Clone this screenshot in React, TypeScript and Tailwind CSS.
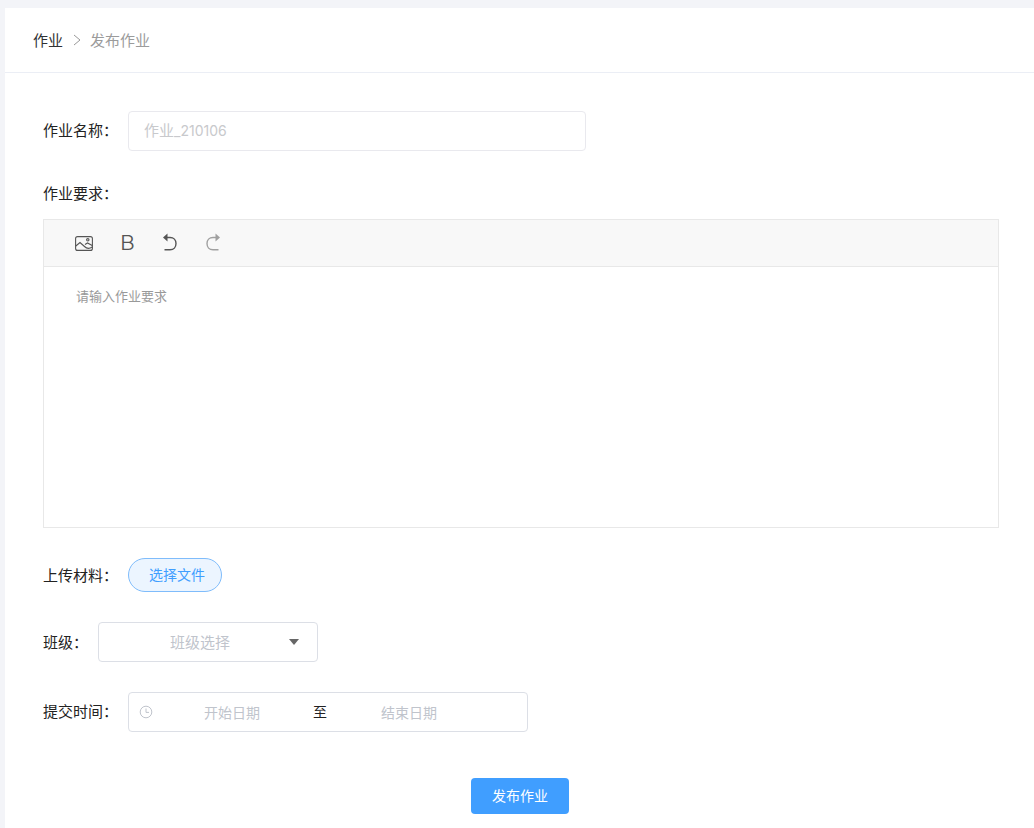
import React from 'react';

const font = "font-['Inter','Noto_Sans_CJK_SC',sans-serif]";

function ImageIcon() {
  return (
    <svg width="18" height="15" viewBox="0 0 18 15" fill="none" stroke="#555" strokeWidth="1.1">
      <rect x="0.6" y="0.6" width="16.8" height="13.8" rx="2" />
      <path d="M0.8 10 L5 6.5 L9.5 10.5 C11.5 12.5 14.5 12.8 17.2 11" />
      <path d="M10 8.5 L12.5 7 L17.2 9.5" />
      <circle cx="12.8" cy="3.8" r="1.2" />
    </svg>
  );
}

function UndoIcon({ color, flip }: { color: string; flip?: boolean }) {
  return (
    <svg
      width="15"
      height="18"
      viewBox="0 0 15 18"
      fill="none"
      stroke={color}
      strokeWidth="1.4"
      className={flip ? '-scale-x-100' : ''}
    >
      <path d="M3.5 4.5 H8 C11.8 4.5 14 7.2 14 10.5 C14 14 11.8 16.8 8 16.8 H2.5" />
      <path d="M5.5 0.5 L1 4.5 L5.5 8.5 Z" fill={color} stroke="none" />
    </svg>
  );
}

function ClockIcon() {
  return (
    <svg width="14" height="14" viewBox="0 0 14 14" fill="none" stroke="#c0c4cc" strokeWidth="1">
      <circle cx="7" cy="7" r="5.8" />
      <path d="M7 3.5 V7.4 H10" />
    </svg>
  );
}

export default function App() {
  return (
    <div className={`min-h-[828px] bg-[#f3f4f8] pl-[5px] pt-2 text-[15px] text-[#222] ${font}`}>
      <div className="h-[820px] overflow-hidden bg-white">
        <div className="flex h-[65px] items-center border-b border-[#ebeef5] pl-7">
          <span className="pt-[2px] text-[#303133]">作业</span>
          <svg width="8" height="12" viewBox="0 0 8 12" fill="none" stroke="#999" strokeWidth="1" className="ml-[10px] mr-[9px]">
            <path d="M1 1 L7 6 L1 11" />
          </svg>
          <span className="pt-[2px] text-[#9b9b9b]">发布作业</span>
        </div>

        <div className="pl-[38px] pr-[35px] pt-[38px]">
          <div className="flex items-center">
            <label className="w-[85px]">作业名称：</label>
            <div className="flex h-10 w-[458px] items-center rounded border border-[#e9e9ee] pl-[15px] text-[#c8c9cc]">
              作业<span className="text-sm">_210106</span>
            </div>
          </div>

          <div className="mt-[33px] h-5 leading-5">作业要求：</div>

          <div className="mt-[15px] h-[309px] border border-[#e8e8e8]">
            <div className="flex h-[47px] items-center border-b border-[#e8e8e8] bg-[#f8f8f8] pl-[31px]">
              <ImageIcon />
              <span className="ml-[27px] origin-left scale-x-[1.15] text-[20px] font-light leading-none text-[#555]">B</span>
              <span className="ml-[29px] -mt-[2px]">
                <UndoIcon color="#555" />
              </span>
              <span className="ml-[29px] -mt-[2px]">
                <UndoIcon color="#a0a0a0" flip />
              </span>
            </div>
            <div className="pl-8 pt-5 text-[13px] leading-[18px] text-[#999]">请输入作业要求</div>
          </div>

          <div className="mt-[30px] flex items-center">
            <label className="w-[85px] pt-[2px]">上传材料：</label>
            <div className="flex h-[34px] w-[94px] items-center justify-center rounded-[17px] border border-[#7fbcfb] bg-[#ecf5ff] pl-1 text-sm text-[#409eff]">
              选择文件
            </div>
          </div>

          <div className="mt-[30px] flex items-center">
            <label className="w-[55px] pt-[2px]">班级：</label>
            <div className="relative flex h-10 w-[220px] items-center justify-center rounded border border-[#dcdfe6] pr-[16px] pt-[2px] text-[#c0c4cc]">
              班级选择
              <span className="absolute right-[18px] top-[16px] h-0 w-0 border-x-[5px] border-t-[6px] border-x-transparent border-t-[#666]" />
            </div>
          </div>

          <div className="mt-[30px] flex items-center">
            <label className="w-[85px]">提交时间：</label>
            <div className="flex h-10 w-[400px] items-center rounded border border-[#dcdfe6] pl-[10px] text-sm">
              <ClockIcon />
              <span className="ml-[51px] pt-px text-[#c0c4cc]">开始日期</span>
              <span className="ml-[53px] text-[#222]">至</span>
              <span className="ml-[54px] pt-px text-[#c0c4cc]">结束日期</span>
            </div>
          </div>

          <div className="mt-[46px] flex justify-center pr-[2px]">
            <button className="h-9 w-[98px] rounded bg-[#409eff] text-sm text-white">发布作业</button>
          </div>
        </div>
      </div>
    </div>
  );
}
